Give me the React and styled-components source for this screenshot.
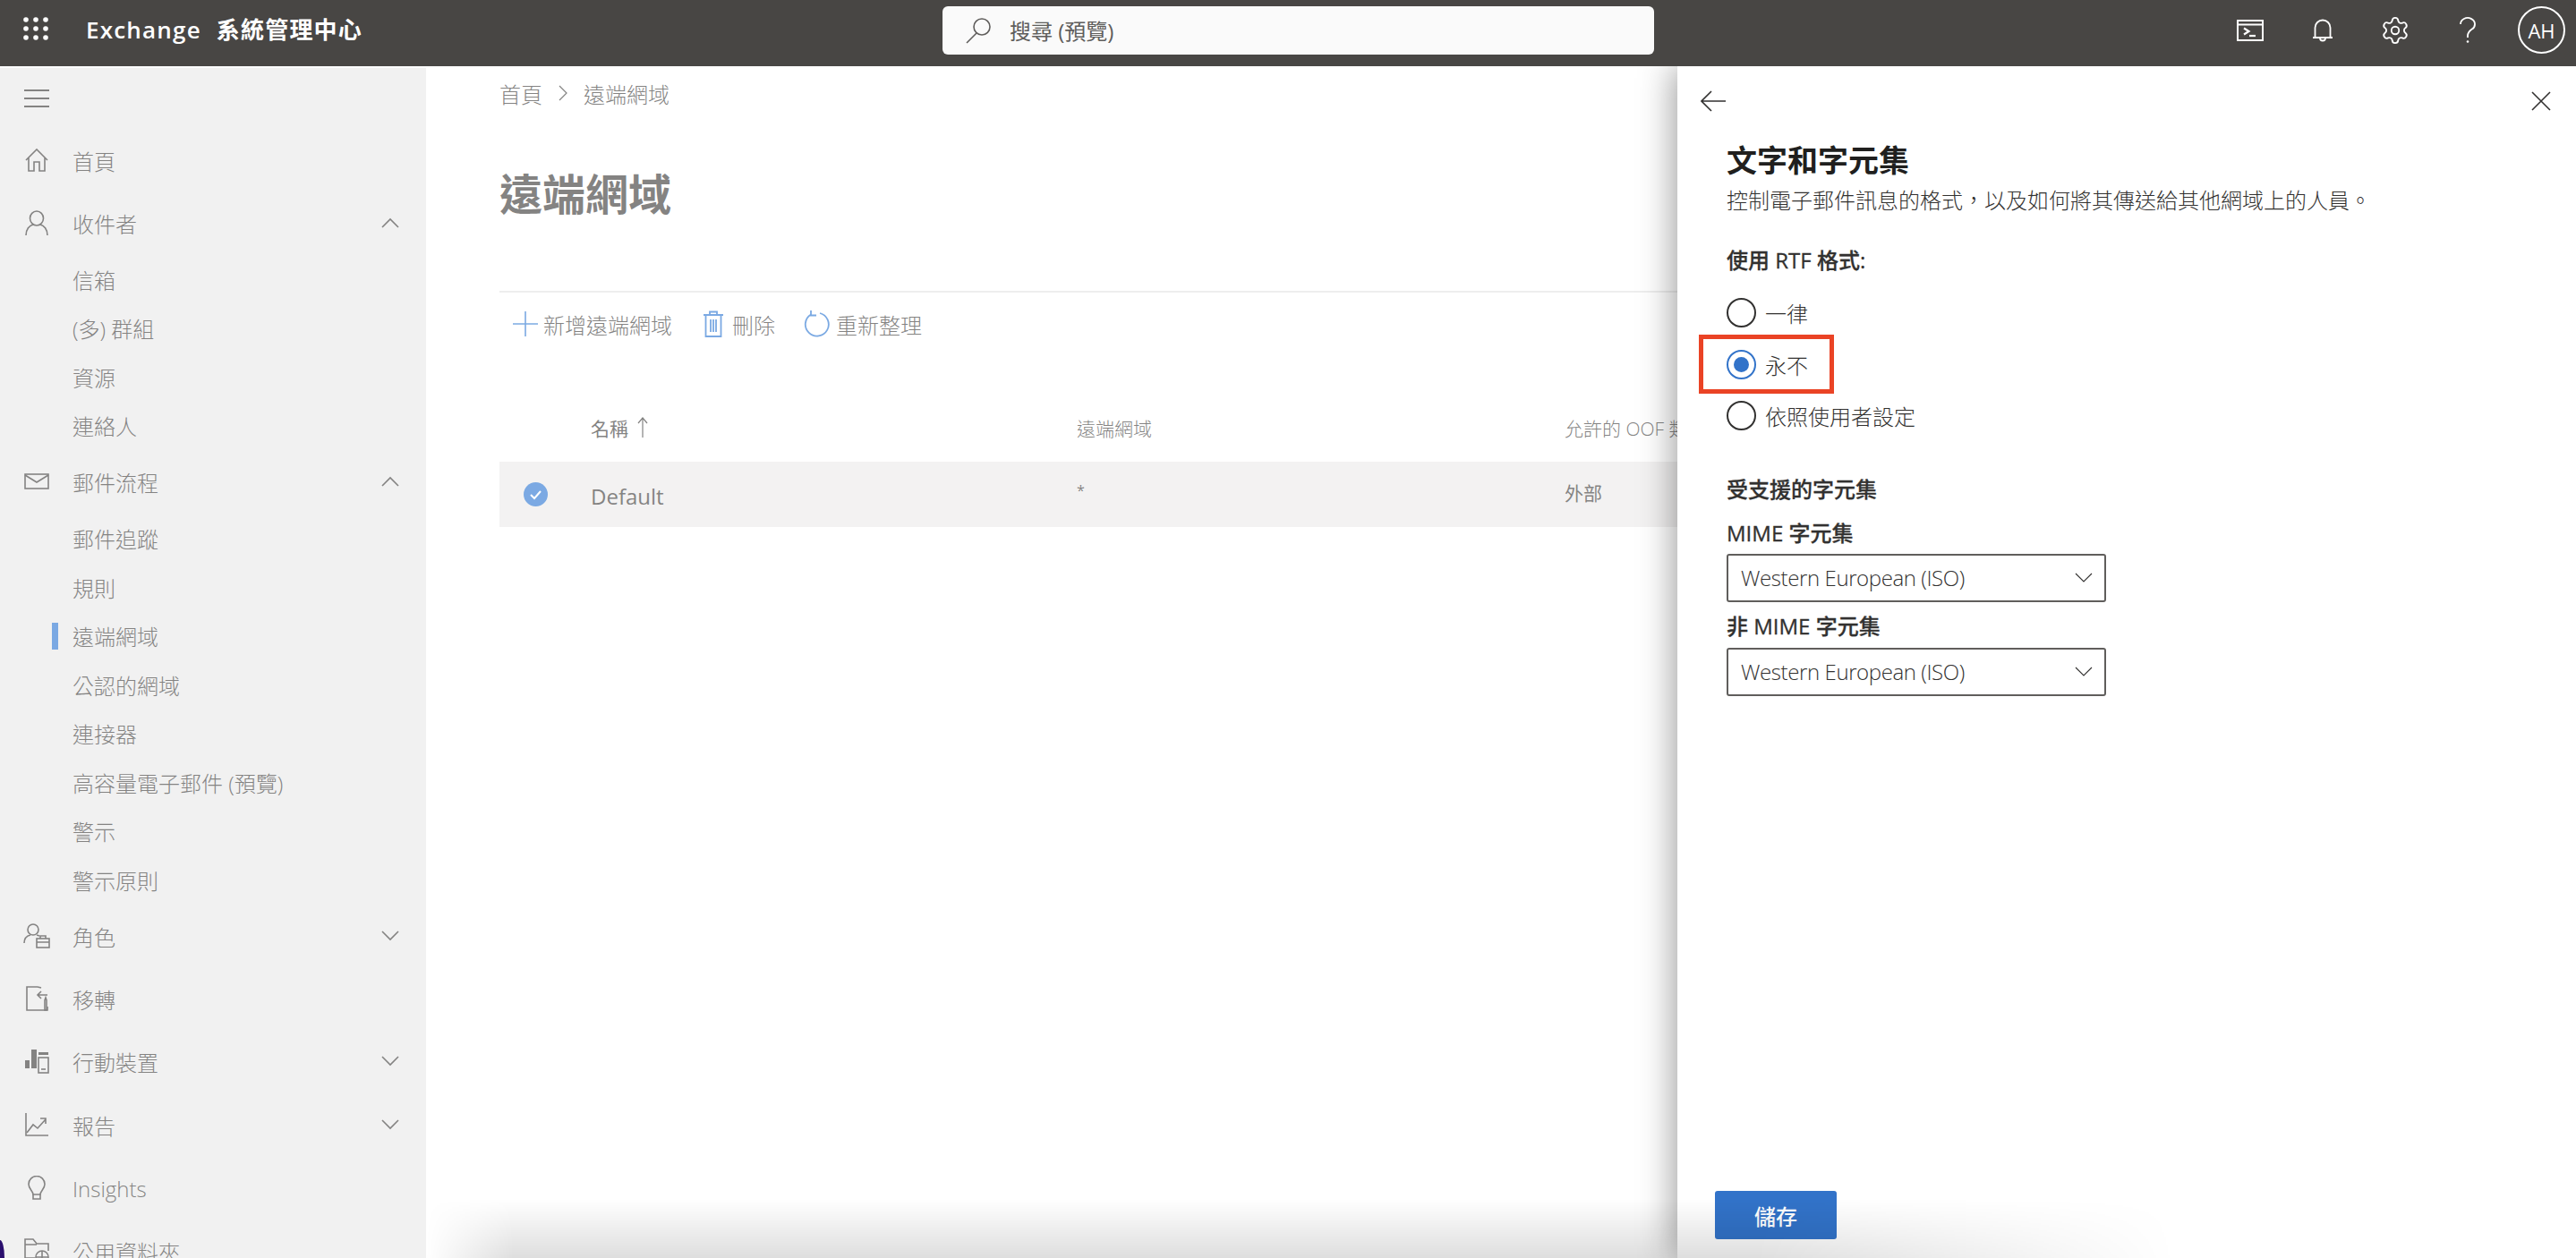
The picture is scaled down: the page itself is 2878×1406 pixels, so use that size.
import React from 'react';
import styled, { createGlobalStyle } from 'styled-components';
import { Settings } from 'lucide-react';

const GlobalStyle = createGlobalStyle`
  html, body {
    margin: 0;
    padding: 0;
    height: 100%;
    overflow: hidden;
    background: #fff;
  }
  * {
    box-sizing: border-box;
  }
  body {
    font-family: "Open Sans", "Noto Sans CJK TC", sans-serif;
    font-size: 24px;
    color: #323130;
  }
`;

const Page = styled.div`
  position: relative;
  display: flex;
  flex-direction: column;
  height: 100vh;
  overflow: hidden;
`;

const TopBar = styled.header`
  display: grid;
  grid-template-columns: 1053px 795px 1fr;
  align-items: center;
  flex: 0 0 74px;
  background: #484644;
  color: #fff;
`;

const Brand = styled.div`
  display: flex;
  align-items: center;
  padding-left: 26px;
  height: 100%;
  padding-bottom: 10px;
`;

const Title = styled.span`
  margin-left: 42px;
  font-size: 26px;
  font-weight: 600;
  letter-spacing: 1.2px;
  word-spacing: 9px;
`;

const SearchBox = styled.div`
  display: flex;
  align-items: center;
  height: 54px;
  margin-bottom: 7px;
  padding-left: 25px;
  gap: 20px;
  background: #fafafa;
  border-radius: 6px;
  color: #605e5c;
`;

const TopActions = styled.div`
  display: flex;
  align-items: center;
  justify-content: flex-end;
  padding: 0 12px 7px 0;
`;

const TopIcon = styled.div`
  display: flex;
  align-items: center;
  justify-content: center;
  width: 81px;
`;

const Avatar = styled.div`
  display: flex;
  align-items: center;
  justify-content: center;
  width: 53px;
  height: 53px;
  margin-left: 16px;
  border: 2px solid #fff;
  border-radius: 50%;
  font-size: 22px;
`;

const Body = styled.div`
  position: relative;
  display: flex;
  flex: 1;
  min-height: 0;
  overflow: hidden;
`;

const Sidebar = styled.aside`
  flex: 0 0 476px;
  padding-top: 2px;
  overflow: hidden;
`;

const MenuToggle = styled.div`
  display: flex;
  align-items: center;
  height: 68px;
  margin-bottom: 2px;
  padding-left: 26px;
  background: #e8e8e8;
`;

const Nav = styled.nav`
  background: #e8e8e8;
  height: 100%;
`;

const NavRow = styled.div`
  display: flex;
  align-items: center;
  height: ${(p) => p.$height || 70}px;
  padding: 0 30px 0 26px;
`;

const NavIcon = styled.span`
  display: flex;
  align-items: center;
  justify-content: center;
  flex: 0 0 30px;
  margin-right: 25px;
`;

const NavLabel = styled.span`
  flex: 1;
  font-weight: 300;
`;

const FirstRows = styled.div`
  margin-top: -2px;
`;

const SubList = styled.div`
  padding-top: ${(p) => p.$top || 0}px;
  padding-bottom: ${(p) => p.$bottom || 0}px;
`;

const SubItem = styled.div`
  position: relative;
  display: flex;
  align-items: center;
  height: 54.5px;
  padding-left: 81px;
  font-weight: 300;

  ${(p) =>
    p.$active &&
    `
    &::before {
      content: "";
      position: absolute;
      left: 58px;
      top: 12px;
      width: 7px;
      height: 30px;
      background: #2371d0;
    }
  `}
`;

const Main = styled.main`
  flex: 1;
  min-width: 0;
  padding: 14px 0 0 82px;
`;

const Breadcrumb = styled.div`
  display: flex;
  align-items: center;
  gap: 18px;
  height: 32px;
  font-weight: 300;
`;

const PageTitle = styled.h1`
  margin: 65px 0 0;
  font-size: 48px;
  line-height: 64px;
  font-weight: 700;
`;

const Divider = styled.div`
  height: 2px;
  margin-top: 76px;
  background: #e3e3e3;
`;

const Toolbar = styled.div`
  display: flex;
  align-items: center;
  height: 50px;
  margin-top: 10px;
  padding-left: 14px;
`;

const ToolButton = styled.div`
  display: flex;
  align-items: center;
  gap: ${(p) => p.$gap || 6}px;
  margin-right: ${(p) => p.$after || 0}px;
  font-weight: 300;
`;

const TableRow = styled.div`
  display: grid;
  grid-template-columns: 102px 543px 545px 1fr;
  align-items: center;
  height: ${(p) => p.$height}px;
  margin-top: ${(p) => p.$top || 0}px;
  background: ${(p) => p.$bg || 'transparent'};
  font-size: 21px;
  font-weight: 300;
`;

const HeaderCell = styled.div`
  display: flex;
  align-items: center;
  gap: 10px;
  white-space: nowrap;
  font-weight: ${(p) => (p.$strong ? 400 : 300)};
`;

const CheckCell = styled.div`
  display: flex;
  padding-left: 27px;
`;

const Cell = styled.div`
  font-size: ${(p) => p.$size || 21}px;
  font-weight: 400;
  padding-top: ${(p) => p.$drop || 0}px;
  padding-bottom: ${(p) => p.$lift || 0}px;
  white-space: nowrap;
`;

const Scrim = styled.div`
  position: absolute;
  inset: 0;
  background: rgba(255, 255, 255, 0.4);
  pointer-events: none;
`;

const Panel = styled.section`
  position: absolute;
  top: 0;
  right: 0;
  bottom: 0;
  display: flex;
  flex-direction: column;
  width: 1004px;
  background: #fff;
  box-shadow: -4px 0 36px rgba(0, 0, 0, 0.38);
`;

const PanelTop = styled.div`
  display: flex;
  align-items: center;
  justify-content: space-between;
  height: 24px;
  margin-top: 27px;
  padding: 0 28px 0 26px;
`;

const PanelContent = styled.div`
  display: flex;
  flex-direction: column;
  align-items: flex-start;
  padding-left: 55px;
`;

const PanelTitle = styled.h2`
  margin: 31px 0 0;
  font-size: 34px;
  line-height: 46px;
  font-weight: 700;
  color: #201f1e;
`;

const Description = styled.p`
  margin: 6px 0 0;
  line-height: 32px;
  font-weight: 300;
`;

const SectionLabel = styled.div`
  margin-top: ${(p) => p.$top}px;
  line-height: 32px;
  font-weight: 500;
  -webkit-text-stroke: 0.3px #323130;
`;

const RadioGroup = styled.div`
  margin-top: 14px;
`;

const RadioRow = styled.label`
  position: relative;
  display: flex;
  align-items: center;
  gap: 10px;
  height: 57.5px;
  font-weight: 300;
`;

const RadioCircle = styled.span`
  position: relative;
  width: 33px;
  height: 33px;
  border-radius: 50%;
  border: 2px solid ${(p) => (p.$checked ? '#3273c9' : '#323130')};

  ${(p) =>
    p.$checked &&
    `
    &::after {
      content: "";
      position: absolute;
      inset: 6px;
      border-radius: 50%;
      background: #3273c9;
    }
  `}
`;

const Highlight = styled.div`
  position: absolute;
  left: -31px;
  top: -5px;
  width: 151px;
  height: 66px;
  border: 5px solid #ea4325;
  pointer-events: none;
`;

const SelectBox = styled.div`
  display: flex;
  align-items: center;
  justify-content: space-between;
  width: 424px;
  height: 54px;
  margin-top: ${(p) => p.$top}px;
  padding: 0 13px 0 14px;
  border: 2px solid #605e5c;
  border-radius: 3px;
  font-weight: 300;
  letter-spacing: -0.4px;
`;

const PanelFooter = styled.div`
  margin-top: auto;
  padding: 0 0 21px 42px;
`;

const SaveButton = styled.button`
  width: 136px;
  height: 54px;
  border: none;
  border-radius: 3px;
  background: #3273c9;
  color: #fff;
  font: inherit;
  font-weight: 500;
`;

const BottomShade = styled.div`
  position: absolute;
  left: 476px;
  bottom: 0;
  width: 1954px;
  height: 66px;
  background: linear-gradient(to top, rgba(0, 0, 0, 0.13), rgba(0, 0, 0, 0));
  mask-image: linear-gradient(to right, transparent 0, #000 5%, #000 76%, transparent 100%);
  pointer-events: none;
`;

const WindowCorner = styled.div`
  position: absolute;
  left: 0;
  bottom: 0;
  width: 5px;
  height: 20px;
  background: #2b0f6e;
  border-top-right-radius: 100% 100%;
`;

const line = { fill: 'none', stroke: 'currentColor', strokeWidth: 1.6 };

const Waffle = () => (
  <svg width="28" height="26" viewBox="0 0 28 26" fill="currentColor">
    {[3, 14, 25].map((x) =>
      [3, 13, 23].map((y) => <circle key={`${x}-${y}`} cx={x} cy={y} r="2.8" />)
    )}
  </svg>
);

const SearchIcon = () => (
  <svg width="30" height="30" viewBox="0 0 30 30" {...line}>
    <circle cx="19" cy="11" r="9" />
    <path d="M13 18 2 29" />
  </svg>
);

const TerminalIcon = () => (
  <svg width="30" height="24" viewBox="0 0 30 24" fill="none" stroke="#fff" strokeWidth="2">
    <rect x="1" y="1" width="28" height="22" />
    <path d="M1 5.5h28" />
    <path d="m8 9.5 5.5 3.5L8 16.5" strokeWidth="2.2" />
    <path d="M14 18h7" strokeWidth="2.2" />
  </svg>
);

const BellIcon = () => (
  <svg width="24" height="28" viewBox="0 0 24 28" fill="none" stroke="#fff" strokeWidth="1.8">
    <path d="M1 22h22M3.5 22V11a8.5 8.5 0 0 1 17 0v11" />
    <path d="M9 22.5a3 3 0 0 0 6 0" />
  </svg>
);

const QuestionIcon = () => (
  <svg width="18" height="30" viewBox="0 0 18 30" fill="none" stroke="#fff" strokeWidth="1.8">
    <path d="M1 8a8 7 0 1 1 12.5 5.8C10.5 16 9 17.5 9 21v2" />
    <circle cx="9" cy="27.5" r="1.3" fill="#fff" stroke="none" />
  </svg>
);

const Hamburger = () => (
  <svg width="30" height="22" viewBox="0 0 30 22" {...line} strokeWidth="2">
    <path d="M1 2h28M1 11h28M1 20h28" />
  </svg>
);

const HomeIcon = () => (
  <svg width="26" height="26" viewBox="0 0 26 26" {...line}>
    <path d="M1 13 13 1l12 12M4 10v15h6v-10h6v10h6V10" />
  </svg>
);

const PersonIcon = () => (
  <svg width="26" height="28" viewBox="0 0 26 28" {...line}>
    <ellipse cx="13" cy="9" rx="7.5" ry="8" />
    <path d="M1 28c0-7 4-11 8-12M25 28c0-7-4-11-8-12" />
  </svg>
);

const MailIcon = () => (
  <svg width="28" height="18" viewBox="0 0 28 18" {...line}>
    <rect x="1" y="1" width="26" height="16" />
    <path d="m1 2 13 8 13-8" />
  </svg>
);

const RoleIcon = () => (
  <svg width="30" height="28" viewBox="0 0 30 28" {...line}>
    <circle cx="11" cy="7" r="6" />
    <path d="M1 22c0-5 3-8 7-9M15 13l3 1" />
    <rect x="15" y="17" width="14" height="10" />
    <path d="M19 17v-3h6v3M15 21h14" />
  </svg>
);

const MigrateIcon = () => (
  <svg width="26" height="28" viewBox="0 0 26 28" {...line}>
    <path d="M14 1H2v26h23v-4M14 1l4 1" />
    <path d="M25 10h-11m4-4-4 4 4 4" />
    <path d="M22 27V16l1-3 1 3v11z" />
  </svg>
);

const MobileIcon = () => (
  <svg width="28" height="28" viewBox="0 0 28 28" fill="none" stroke="currentColor" strokeWidth="1.6">
    <rect x="1" y="13" width="5" height="9" fill="currentColor" stroke="none" />
    <rect x="8" y="1" width="6" height="21" fill="currentColor" stroke="none" />
    <rect x="16" y="4" width="11" height="3" fill="currentColor" stroke="none" />
    <rect x="16" y="10" width="11" height="17" />
    <path d="M19 23h5" />
  </svg>
);

const ReportIcon = () => (
  <svg width="26" height="26" viewBox="0 0 26 26" {...line}>
    <path d="M1 0v25h25" />
    <path d="m2 22 7-9 5 4 9-10M17 6h6v6" />
  </svg>
);

const BulbIcon = () => (
  <svg width="20" height="28" viewBox="0 0 20 28" {...line}>
    <path d="M6 21c0-4-5-6-5-11.500a9 9 0 0 1 18 0C19 15 14 17 14 21z" />
    <path d="M6 21v5h8v-5" />
  </svg>
);

const FolderIcon = () => (
  <svg width="28" height="28" viewBox="0 0 28 28" {...line}>
    <path d="M12 22H1V1h9l4 5h13v8M1 7h13" />
    <circle cx="20" cy="21" r="7" />
    <path d="M13 21h14M20 14v14" />
  </svg>
);

const Chevron = ({ up, thin }) => (
  <svg width="20" height="12" viewBox="0 0 20 12" {...line} strokeWidth={thin ? 1.1 : 1.6}>
    <path d={up ? 'M1 11 10 2l9 9' : 'm1 1 9 9 9-9'} />
  </svg>
);

const BreadcrumbChevron = () => (
  <svg width="10" height="18" viewBox="0 0 10 18" {...line} strokeWidth="1.2">
    <path d="m1 1 8 8-8 8" />
  </svg>
);

const PlusIcon = () => (
  <svg width="30" height="30" viewBox="0 0 30 30" fill="none" stroke="#2371d0" strokeWidth="1.6">
    <path d="M15 1v28M1 15h28" />
  </svg>
);

const TrashIcon = () => (
  <svg width="24" height="30" viewBox="0 0 24 30" fill="none" stroke="#2371d0" strokeWidth="1.8">
    <path d="M1 5h22M8 5V1.500h8V5M3.500 5v24h17V5M9 10v14M12 10v14M15 10v14" />
  </svg>
);

const RefreshIcon = () => (
  <svg width="30" height="30" viewBox="0 0 30 30" fill="none" stroke="#2371d0" strokeWidth="1.8">
    <path d="M9 4.500A13 13 0 1 0 19 3" />
    <path d="M9 0v5.500h6" />
  </svg>
);

const CheckBadge = () => (
  <svg width="27" height="27" viewBox="0 0 27 27">
    <circle cx="13.500" cy="13.500" r="13.500" fill="#2371d0" />
    <path d="m8 14 4 4 7-8" fill="none" stroke="#fff" strokeWidth="2" />
  </svg>
);

const BackIcon = () => (
  <svg width="28" height="24" viewBox="0 0 28 24" {...line}>
    <path d="M28 12H1M12 1 1 12l11 11" />
  </svg>
);

const CloseIcon = () => (
  <svg width="22" height="22" viewBox="0 0 22 22" {...line}>
    <path d="m1 1 20 20M21 1 1 21" />
  </svg>
);

const recipients = ['信箱', '(多) 群組', '資源', '連絡人'];
const mailFlow = ['郵件追蹤', '規則', '遠端網域', '公認的網域', '連接器', '高容量電子郵件 (預覽)', '警示', '警示原則'];

const NavItem = ({ icon, label, open, height }) => (
  <NavRow $height={height}>
    <NavIcon>{icon}</NavIcon>
    <NavLabel>{label}</NavLabel>
    {open !== undefined && <Chevron up={open} />}
  </NavRow>
);

export default function App() {
  return (
    <Page>
      <GlobalStyle />
      <TopBar>
        <Brand>
          <Waffle />
          <Title>Exchange 系統管理中心</Title>
        </Brand>
        <SearchBox>
          <SearchIcon />
          <span>搜尋 (預覽)</span>
        </SearchBox>
        <TopActions>
          <TopIcon><TerminalIcon /></TopIcon>
          <TopIcon><BellIcon /></TopIcon>
          <TopIcon><Settings size={34} strokeWidth={1.3} /></TopIcon>
          <TopIcon><QuestionIcon /></TopIcon>
          <Avatar>AH</Avatar>
        </TopActions>
      </TopBar>

      <Body>
        <Sidebar>
          <MenuToggle><Hamburger /></MenuToggle>
          <Nav>
            <FirstRows>
              <NavItem icon={<HomeIcon />} label="首頁" />
              <NavItem icon={<PersonIcon />} label="收件者" open={true} />
            </FirstRows>
            <SubList $top={1}>
              {recipients.map((item) => <SubItem key={item}>{item}</SubItem>)}
            </SubList>
            <NavItem icon={<MailIcon />} label="郵件流程" open={true} />
            <SubList $top={1.5} $bottom={0.5}>
              {mailFlow.map((item) => (
                <SubItem key={item} $active={item === '遠端網域'}>{item}</SubItem>
              ))}
            </SubList>
            <NavItem icon={<RoleIcon />} label="角色" open={false} />
            <NavItem icon={<MigrateIcon />} label="移轉" />
            <NavItem icon={<MobileIcon />} label="行動裝置" open={false} />
            <NavItem icon={<ReportIcon />} label="報告" open={false} height={72} />
            <NavItem icon={<BulbIcon />} label="Insights" />
            <NavItem icon={<FolderIcon />} label="公用資料夾" />
          </Nav>
        </Sidebar>

        <Main>
          <Breadcrumb>
            <span>首頁</span>
            <BreadcrumbChevron />
            <span>遠端網域</span>
          </Breadcrumb>
          <PageTitle>遠端網域</PageTitle>
          <Divider />
          <Toolbar>
            <ToolButton $gap={5} $after={34}><PlusIcon />新增遠端網域</ToolButton>
            <ToolButton $gap={9} $after={31}><TrashIcon />刪除</ToolButton>
            <ToolButton $gap={7}><RefreshIcon />重新整理</ToolButton>
          </Toolbar>
          <TableRow $height={76} $top={53}>
            <div />
            <HeaderCell $strong>
              名稱
              <svg width="12" height="24" viewBox="0 0 12 24" {...line} strokeWidth="1.2">
                <path d="M6 23V1M1 7l5-6 5 6" />
              </svg>
            </HeaderCell>
            <HeaderCell>遠端網域</HeaderCell>
            <HeaderCell>允許的 OOF 類型</HeaderCell>
          </TableRow>
          <TableRow $height={73} $bg="#ebeae9">
            <CheckCell><CheckBadge /></CheckCell>
            <Cell $size={24} $drop={3}>Default</Cell>
            <Cell $size={16} $lift={10}>*</Cell>
            <Cell $lift={6}>外部</Cell>
          </TableRow>
        </Main>

        <Scrim />

        <Panel>
          <PanelTop>
            <BackIcon />
            <CloseIcon />
          </PanelTop>
          <PanelContent>
            <PanelTitle>文字和字元集</PanelTitle>
            <Description>控制電子郵件訊息的格式，以及如何將其傳送給其他網域上的人員。</Description>
            <SectionLabel $top={35}>使用 RTF 格式:</SectionLabel>
            <RadioGroup>
              <RadioRow><RadioCircle />一律</RadioRow>
              <RadioRow>
                <RadioCircle $checked />永不
                <Highlight />
              </RadioRow>
              <RadioRow><RadioCircle />依照使用者設定</RadioRow>
            </RadioGroup>
            <SectionLabel $top={37}>受支援的字元集</SectionLabel>
            <SectionLabel $top={17}>MIME 字元集</SectionLabel>
            <SelectBox $top={7}>
              Western European (ISO)
              <Chevron thin />
            </SelectBox>
            <SectionLabel $top={11}>非 MIME 字元集</SectionLabel>
            <SelectBox $top={8}>
              Western European (ISO)
              <Chevron thin />
            </SelectBox>
          </PanelContent>
          <PanelFooter>
            <SaveButton>儲存</SaveButton>
          </PanelFooter>
        </Panel>

        <BottomShade />
        <WindowCorner />
      </Body>
    </Page>
  );
}
